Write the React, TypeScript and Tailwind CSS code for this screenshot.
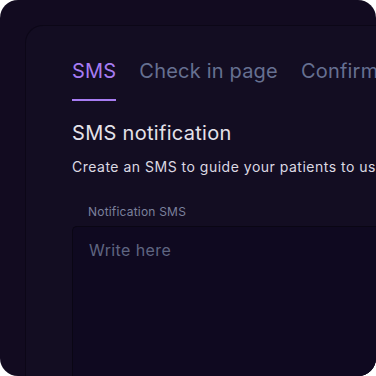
import React from "react";

const tabs = ["SMS", "Check in page", "Confirmation"];

export default function App() {
  return (
    <div className="w-[376px] h-[376px] bg-white">
      <div
        className="w-full h-full rounded-[18px] bg-[#120b20] overflow-hidden pl-[25px] pt-[25px]"
        style={{ fontFamily: "Inter, 'Open Sans', sans-serif" }}
      >
        <div className="h-full rounded-tl-[18px] border-l border-t border-[#0c0717] bg-[#130d22] pl-[46px] pt-[30px] overflow-hidden">
          {/* Tabs */}
          <div className="flex gap-[23px] whitespace-nowrap">
            {tabs.map((t, i) => (
              <div
                key={t}
                className={`pb-[13px] border-b-2 text-[20px] leading-[30px] tracking-[0.2px] ${
                  i === 0 ? "text-[#a77cf2] border-[#a77cf2]" : "text-[#667091] border-transparent"
                }`}
              >
                {t}
              </div>
            ))}
          </div>

          <div className="pt-[17px] text-[20px] leading-[30px] tracking-[0.3px] text-[#e4e2ea] whitespace-nowrap">
            SMS notification
          </div>
          <div className="pt-[9px] text-[14px] leading-[20px] tracking-[0.5px] text-[#dcd9e3] whitespace-nowrap">
            Create an SMS to guide your patients to use the check in page
          </div>

          <div className="pt-[26px] pl-4 text-[12px] leading-[18px] tracking-[0.2px] text-[#7b809c] whitespace-nowrap">
            Notification SMS
          </div>
          <div className="mt-[5px] h-[200px] rounded-tl-[5px] border-l border-t border-[#0a0614] bg-[#0f0920] px-4 pt-[11px]">
            <div className="text-[16px] leading-[24px] tracking-[0.4px] text-[#5f6581]">Write here</div>
          </div>
        </div>
      </div>
    </div>
  );
}
